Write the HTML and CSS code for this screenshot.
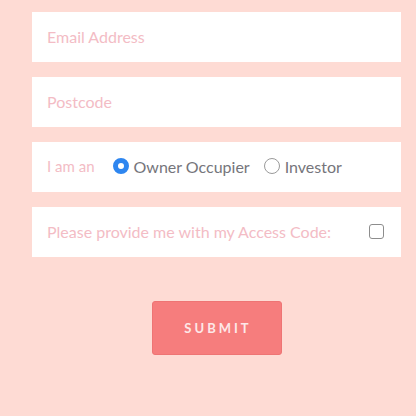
FILE: index.html
```html
<!DOCTYPE html>
<html>
<head>
<meta charset="utf-8">
<link rel="stylesheet" href="styles.css">
</head>
<body>
<form class="form">
  <div class="field"><input class="text" type="text" placeholder="Email Address"></div>
  <div class="field"><input class="text" type="text" placeholder="Postcode"></div>
  <div class="field">
    <span class="label label-small">I am an</span>
    <label class="opt opt-first"><input class="radio" type="radio" name="t" checked><span>Owner Occupier</span></label>
    <label class="opt"><input class="radio" type="radio" name="t"><span>Investor</span></label>
  </div>
  <div class="field field-check">
    <span class="label">Please provide me with my Access Code:</span>
    <input class="check" type="checkbox">
  </div>
  <div class="actions"><button class="submit" type="button">SUBMIT</button></div>
</form>
</body>
</html>
```
FILE: styles.css
```css
html, body {
  margin: 0;
  padding: 0;
  background: #fedbd4;
  font-family: Lato, "Open Sans", sans-serif;
}
.form {
  margin: 0;
  padding: 12px 15px 0 32px;
  display: flex;
  flex-direction: column;
  gap: 15px;
}
.field {
  height: 50px;
  background: #ffffff;
  display: flex;
  align-items: center;
  padding: 0 15px 2px;
  box-sizing: border-box;
}
.text {
  border: 0;
  outline: 0;
  width: 100%;
  padding: 0;
  font: inherit;
  font-size: 16px;
  background: transparent;
}
.text::placeholder { color: #f3bcc5; opacity: 1; }
.label {
  font-size: 16px;
  color: #f3bcc5;
}
.label-small { font-size: 15px; }
.opt {
  display: flex;
  align-items: center;
  font-size: 16px;
  color: #75757b;
  margin-left: 14px;
}
.opt-first { margin-left: 18px; }
.radio {
  appearance: none;
  -webkit-appearance: none;
  margin: 0 5px 0 0;
  width: 16px;
  height: 16px;
  border-radius: 50%;
  border: 1px solid #9a9a9a;
  box-sizing: border-box;
  background: #fff;
}
.radio:checked {
  border: 5px solid #2e86f0;
  background: #fff;
}
.field-check { justify-content: space-between; }
.check {
  appearance: none;
  -webkit-appearance: none;
  margin: 0 2px 0 0;
  width: 15px;
  height: 15px;
  border: 1px solid #8d8d8d;
  border-radius: 3px;
  box-sizing: border-box;
  background: #fff;
}
.actions {
  display: flex;
  justify-content: center;
  padding-top: 29px;
}
.submit {
  width: 130px;
  height: 54px;
  background: #f67d7d;
  border: 1px solid #ee7474;
  border-radius: 3px;
  color: #fde8e8;
  font-family: Lato, sans-serif;
  font-weight: 700;
  font-size: 13px;
  letter-spacing: 3px;
  padding: 0 0 0 3px;
}
```
